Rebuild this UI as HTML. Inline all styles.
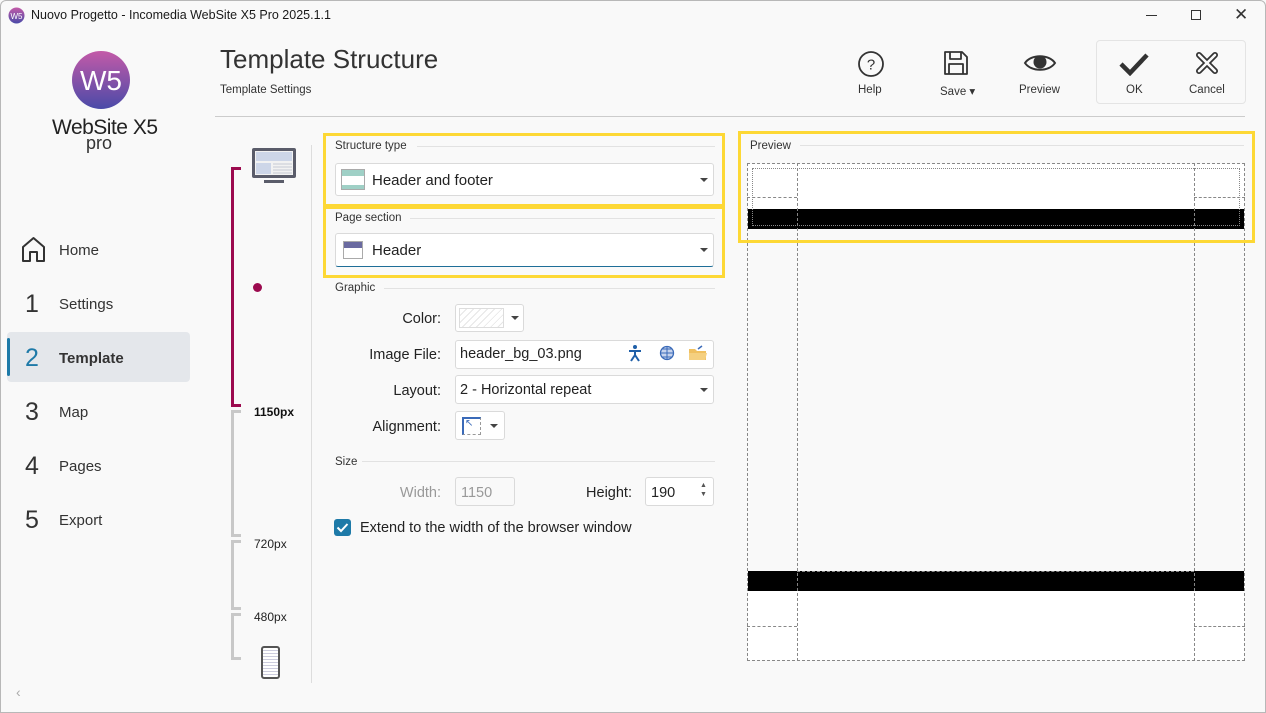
<!DOCTYPE html>
<html><head><meta charset="utf-8"><style>
*{box-sizing:border-box;margin:0;padding:0}
body{width:1266px;height:713px;background:#f9f9f9;font-family:"Liberation Sans",sans-serif;color:#222;position:relative;overflow:hidden}
.a{position:absolute}
.win{position:absolute;left:0;top:0;width:1266px;height:713px;border:1px solid #b8b8b8;border-radius:6px 6px 0 0}
.t{font-size:12.5px;color:#1a1a1a}
.nav{font-size:15px;color:#333}
.num{font-size:25px;color:#333;width:30px;text-align:center}
.lbl{font-size:11.5px;color:#333}
.hl{height:1px;background:#e2e2e2}
.box{background:#fff;border:1px solid #dadada;border-radius:3px}
.fl{font-size:14.5px;color:#222;text-align:right}
.dd{width:0;height:0;border-left:4px solid transparent;border-right:4px solid transparent;border-top:4px solid #444}
.yb{border:3px solid #fdd835}
.dash{border:1px dashed #888}
</style></head><body>
<div class="win"></div>
<svg class="a" style="left:8px;top:7px" width="17" height="17"><defs><linearGradient id="g" x1="0" y1="0" x2="0" y2="1"><stop offset="0" stop-color="#c35aa8"/><stop offset="1" stop-color="#4a4aa8"/></linearGradient></defs><circle cx="8.5" cy="8.5" r="8" fill="url(#g)"/><text x="8.5" y="12" font-size="8" fill="#fff" text-anchor="middle" font-family="Liberation Sans">W5</text></svg>
<div class="a t" style="left:31px;top:8px">Nuovo Progetto - Incomedia WebSite X5 Pro 2025.1.1</div>
<div class="a" style="left:1146px;top:15px;width:11px;height:1px;background:#333"></div>
<div class="a" style="left:1191px;top:10px;width:10px;height:10px;border:1px solid #333"></div>
<div class="a" style="left:1234px;top:5px;font-size:17px;color:#333">✕</div>
<svg class="a" style="left:71px;top:50px" width="60" height="60"><defs><linearGradient id="g2" x1="0" y1="0" x2="0" y2="1"><stop offset="0" stop-color="#c35aa8"/><stop offset="1" stop-color="#4a4aa8"/></linearGradient></defs><circle cx="30" cy="30" r="29" fill="url(#g2)"/><text x="30" y="40" font-size="28" fill="#fff" text-anchor="middle" font-family="Liberation Sans">W5</text></svg>
<div class="a" style="left:52px;top:116px;font-size:21px;color:#222;letter-spacing:-0.5px">WebSite X5</div>
<div class="a" style="left:86px;top:133px;font-size:18px;color:#333">pro</div>
<svg class="a" style="left:21px;top:236px" width="25" height="27"><path d="M2 25V11L12.5 2L23 11V25H16V16H9V25Z" fill="none" stroke="#333" stroke-width="2" stroke-linejoin="round"/></svg>
<div class="a nav" style="left:59px;top:242px">Home</div>
<div class="a num" style="left:17px;top:290px">1</div><div class="a nav" style="left:59px;top:296px">Settings</div>
<div class="a" style="left:7px;top:332px;width:183px;height:50px;background:#e4e7eb;border-radius:4px"></div>
<div class="a" style="left:7px;top:338px;width:3px;height:38px;background:#1e7aa8;border-radius:2px"></div>
<div class="a num" style="left:17px;top:344px;color:#1e7aa8">2</div><div class="a nav" style="left:59px;top:350px;font-weight:bold">Template</div>
<div class="a num" style="left:17px;top:398px">3</div><div class="a nav" style="left:59px;top:404px">Map</div>
<div class="a num" style="left:17px;top:452px">4</div><div class="a nav" style="left:59px;top:458px">Pages</div>
<div class="a num" style="left:17px;top:506px">5</div><div class="a nav" style="left:59px;top:512px">Export</div>
<div class="a" style="left:16px;top:684px;color:#aaa;font-size:14px">‹</div>
<div class="a" style="left:220px;top:44px;font-size:26px;color:#333">Template Structure</div>
<div class="a" style="left:220px;top:84px;font-size:11.5px;color:#333">Template Settings</div>
<div class="a hl" style="left:215px;top:116px;width:1030px;background:#ccc"></div>
<svg class="a" style="left:857px;top:50px" width="28" height="28"><circle cx="14" cy="14" r="12" fill="none" stroke="#333" stroke-width="1.8"/><text x="14" y="19.5" font-size="15" text-anchor="middle" fill="#333" font-family="Liberation Sans">?</text></svg>
<div class="a lbl" style="left:858px;top:84px">Help</div>
<svg class="a" style="left:943px;top:50px" width="26" height="26"><path d="M2 2H19L24 7V24H2Z M7 2V9H18V2 M6 24V14H20V24" fill="none" stroke="#333" stroke-width="1.8" stroke-linejoin="round"/></svg>
<div class="a lbl" style="left:940px;top:84px">Save ▾</div>
<svg class="a" style="left:1023px;top:52px" width="34" height="22"><path d="M2 11C8 2 26 2 32 11C26 20 8 20 2 11Z" fill="none" stroke="#333" stroke-width="2"/><circle cx="17" cy="10" r="6.5" fill="#333"/></svg>
<div class="a lbl" style="left:1019px;top:84px">Preview</div>
<div class="a" style="left:1096px;top:40px;width:150px;height:64px;border:1px solid #e4e4e4;border-radius:4px"></div>
<svg class="a" style="left:1119px;top:52px" width="30" height="24"><path d="M2 12L11 21L28 3" fill="none" stroke="#333" stroke-width="4.5"/></svg>
<div class="a lbl" style="left:1126px;top:84px">OK</div>
<svg class="a" style="left:1195px;top:51px" width="24" height="24"><path d="M4 4L20 20M20 4L4 20" stroke="#333" stroke-width="6" stroke-linecap="round"/><path d="M4 4L20 20M20 4L4 20" stroke="#f9f9f9" stroke-width="2.6" stroke-linecap="round"/></svg>
<div class="a lbl" style="left:1189px;top:84px">Cancel</div>
<svg class="a" style="left:250px;top:146px" width="50" height="40"><rect x="2" y="2" width="44" height="30" fill="#5a5c6a" rx="2"/><rect x="5" y="5" width="38" height="24" fill="#f2f2f2"/><rect x="6" y="6" width="36" height="9" fill="#cdd6e8"/><rect x="6" y="17" width="15" height="11" fill="#cdd6e8"/><path d="M23 18H42M23 21H42M23 24H42M23 27H42" stroke="#c5c9d4" stroke-width="1"/><rect x="14" y="34" width="20" height="3" fill="#5a5c6a"/></svg>
<div class="a" style="left:231px;top:167px;width:10px;height:240px;border:3px solid #9c0b4f;border-right:none"></div>
<div class="a" style="left:253px;top:283px;width:9px;height:9px;border-radius:50%;background:#9c0b4f"></div>
<div class="a" style="left:254px;top:405px;font-size:12px;font-weight:bold;color:#111">1150px</div>
<div class="a" style="left:231px;top:410px;width:10px;height:127px;border:3px solid #c8c8c8;border-right:none"></div>
<div class="a" style="left:254px;top:537px;font-size:12px;color:#222">720px</div>
<div class="a" style="left:231px;top:540px;width:10px;height:70px;border:3px solid #c8c8c8;border-right:none"></div>
<div class="a" style="left:254px;top:610px;font-size:12px;color:#222">480px</div>
<div class="a" style="left:231px;top:613px;width:10px;height:47px;border:3px solid #c8c8c8;border-right:none"></div>
<div class="a" style="left:261px;top:646px;width:19px;height:33px;border:2px solid #555;border-radius:3px;background:repeating-linear-gradient(#fff 0 2px,#ccd 2px 3px)"></div>
<div class="a" style="left:311px;top:145px;width:1px;height:538px;background:#ddd"></div>
<div class="a yb" style="left:323px;top:133px;width:402px;height:74px"></div>
<div class="a" style="left:335px;top:140px;font-size:11.5px;color:#333">Structure type</div>
<div class="a hl" style="left:417px;top:146px;width:298px"></div>
<div class="a box" style="left:335px;top:163px;width:379px;height:33px"></div>
<div class="a" style="left:341px;top:169px;width:24px;height:21px;border:1px solid #aaa;background:linear-gradient(#9fd0c6 0 6px,#fff 6px 15px,#9fd0c6 15px)"></div>
<div class="a" style="left:372px;top:172px;font-size:15px">Header and footer</div>
<div class="a dd" style="left:700px;top:178px"></div>
<div class="a yb" style="left:323px;top:206px;width:402px;height:72px"></div>
<div class="a" style="left:335px;top:212px;font-size:11.5px;color:#333">Page section</div>
<div class="a hl" style="left:410px;top:218px;width:305px"></div>
<div class="a box" style="left:335px;top:233px;width:379px;height:34px;border-bottom:1.5px solid #1e6e98"></div>
<div class="a" style="left:343px;top:241px;width:20px;height:18px;border:1px solid #aaa;background:linear-gradient(#6a6aa0 0 6px,#fff 6px)"></div>
<div class="a" style="left:372px;top:242px;font-size:15px">Header</div>
<div class="a dd" style="left:700px;top:248px"></div>
<div class="a" style="left:335px;top:282px;font-size:11.5px;color:#333">Graphic</div>
<div class="a hl" style="left:384px;top:288px;width:331px"></div>
<div class="a fl" style="left:340px;top:311px;width:101px">Color:</div>
<div class="a box" style="left:455px;top:304px;width:69px;height:28px"></div>
<div class="a" style="left:459px;top:308px;width:45px;height:20px;border:1px solid #ddd;background:repeating-linear-gradient(135deg,#fff 0 4px,#e6e6e6 4px 5px)"></div>
<div class="a dd" style="left:511px;top:316px"></div>
<div class="a fl" style="left:340px;top:347px;width:101px">Image File:</div>
<div class="a box" style="left:455px;top:340px;width:259px;height:29px"></div>
<div class="a" style="left:460px;top:346px;font-size:14.5px">header_bg_03.png</div>
<svg class="a" style="left:627px;top:344px" width="16" height="18"><circle cx="8" cy="3" r="2" fill="#1f5fa8"/><path d="M2 7H14M8 6V11L4 17M8 11L12 17" stroke="#1f5fa8" stroke-width="2" fill="none"/></svg>
<svg class="a" style="left:658px;top:344px" width="18" height="17"><circle cx="9" cy="9" r="6.5" fill="#c7d4ee" stroke="#3a6ab8" stroke-width="1.3"/><path d="M2.5 9H15.5M9 2.5V15.5M4 5H14M4 13H14" stroke="#3a6ab8" stroke-width="1"/></svg>
<svg class="a" style="left:688px;top:345px" width="20" height="16"><path d="M1 4H7L9 6H18V15H1Z" fill="#f0c060"/><path d="M1 8H19L17 15H1Z" fill="#f5d080"/><path d="M10 4L14 1" stroke="#3a6ab8" stroke-width="1.5"/></svg>
<div class="a fl" style="left:340px;top:383px;width:101px">Layout:</div>
<div class="a box" style="left:455px;top:375px;width:259px;height:29px"></div>
<div class="a" style="left:460px;top:382px;font-size:14.5px">2 - Horizontal repeat</div>
<div class="a dd" style="left:700px;top:388px"></div>
<div class="a fl" style="left:340px;top:419px;width:101px">Alignment:</div>
<div class="a box" style="left:455px;top:411px;width:50px;height:29px"></div>
<div class="a" style="left:462px;top:417px;width:19px;height:18px;border:1px dashed #999;border-top:2px solid #3a6ab8;border-left:2px solid #3a6ab8"></div>
<div class="a" style="left:465px;top:418px;font-size:10px;color:#3a6ab8">↖</div>
<div class="a dd" style="left:490px;top:424px"></div>
<div class="a" style="left:335px;top:456px;font-size:11.5px;color:#333">Size</div>
<div class="a hl" style="left:362px;top:461px;width:353px"></div>
<div class="a fl" style="left:380px;top:485px;width:61px;color:#999">Width:</div>
<div class="a box" style="left:455px;top:477px;width:60px;height:29px;background:#f9f9f9"></div>
<div class="a" style="left:461px;top:485px;font-size:14.5px;color:#999">1150</div>
<div class="a fl" style="left:560px;top:485px;width:72px">Height:</div>
<div class="a box" style="left:645px;top:477px;width:69px;height:29px"></div>
<div class="a" style="left:651px;top:485px;font-size:14.5px">190</div>
<div class="a" style="left:700px;top:481px;font-size:7px;color:#555;line-height:9px">▲<br>▼</div>
<div class="a" style="left:334px;top:519px;width:17px;height:17px;background:#1e7aa8;border-radius:3px"></div>
<svg class="a" style="left:334px;top:519px" width="17" height="17"><path d="M3.5 8.5L7 12L13.5 5" stroke="#fff" stroke-width="2" fill="none"/></svg>
<div class="a" style="left:360px;top:520px;font-size:14.5px">Extend to the width of the browser window</div>
<div class="a" style="left:750px;top:140px;font-size:11.5px;color:#333">Preview</div>
<div class="a hl" style="left:800px;top:145px;width:444px"></div>
<div class="a" style="left:748px;top:164px;width:496px;height:45px;background:#fff"></div>
<div class="a" style="left:748px;top:209px;width:496px;height:20px;background:#000"></div>
<div class="a" style="left:752px;top:168px;width:488px;height:58px;border:1px dotted #888"></div>
<div class="a" style="left:748px;top:571px;width:496px;height:20px;background:#000"></div>
<div class="a" style="left:748px;top:591px;width:496px;height:69px;background:#fff"></div>
<div class="a dash" style="left:747px;top:163px;width:498px;height:498px"></div>
<div class="a" style="left:797px;top:163px;width:1px;height:498px;border-left:1px dashed #888"></div>
<div class="a" style="left:1194px;top:163px;width:1px;height:498px;border-left:1px dashed #888"></div>
<div class="a" style="left:747px;top:197px;width:50px;border-top:1px dashed #888"></div>
<div class="a" style="left:1194px;top:197px;width:51px;border-top:1px dashed #888"></div>
<div class="a" style="left:797px;top:571px;width:397px;border-top:1px dashed #888"></div>
<div class="a" style="left:747px;top:626px;width:50px;border-top:1px dashed #888"></div>
<div class="a" style="left:1194px;top:626px;width:51px;border-top:1px dashed #888"></div>
<div class="a yb" style="left:738px;top:131px;width:517px;height:112px"></div>
</body></html>
